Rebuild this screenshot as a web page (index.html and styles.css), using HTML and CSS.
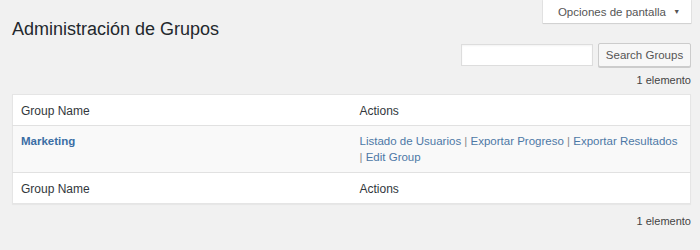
FILE: index.html
```html
<!DOCTYPE html>
<html lang="es">
<head>
    <meta charset="UTF-8">
    <meta name="viewport" content="width=device-width, initial-scale=1.0">
    <title>Administración de Grupos</title>
    <link rel="stylesheet" href="styles.css">
</head>
<body>

<div class="wrap">
    <div class="top-bar">
        <h1 class="page-title">Administración de Grupos</h1>
        <button class="screen-options" type="button">Opciones de pantalla <span class="arrow">&#9660;</span></button>
    </div>

    <form class="search-box">
        <input class="search-input" type="search">
        <button class="button" type="button">Search Groups</button>
    </form>

    <div class="count">1 elemento</div>

    <table class="list-table">
        <colgroup>
            <col class="col-name">
            <col>
        </colgroup>
        <thead>
            <tr>
                <th>Group Name</th>
                <th>Actions</th>
            </tr>
        </thead>
        <tbody>
            <tr class="alt">
                <td><a class="row-title" href="#">Marketing</a></td>
                <td class="actions">
                    <span class="item"><a href="#">Listado de Usuarios</a></span>
                    <span class="item">| <a href="#">Exportar Progreso</a></span>
                    <span class="item">| <a href="#">Exportar Resultados</a></span>
                    <span class="item">| <a href="#">Edit Group</a></span>
                </td>
            </tr>
        </tbody>
        <tfoot>
            <tr>
                <th>Group Name</th>
                <th>Actions</th>
            </tr>
        </tfoot>
    </table>

    <div class="count bottom">1 elemento</div>
</div>

</body>
</html>
```

FILE: styles.css
```css
body {
    margin: 0;
    background: #f1f1f1;
    color: #32373c;
    font-family: "Liberation Sans", Arial, sans-serif;
    font-size: 12px;
}
.wrap {
    padding: 0 9px 0 12px;
}
.top-bar {
    display: flex;
    justify-content: space-between;
    align-items: flex-start;
}
.page-title {
    margin: 17px 0 0;
    font-size: 18px;
    font-weight: 400;
    line-height: 24px;
    color: #23282d;
}
.screen-options {
    width: 148px;
    height: 23px;
    border: none;
    background: #fff;
    box-shadow: 0 0 0 1px rgba(0, 0, 0, 0.05), 0 1px 1px rgba(0, 0, 0, 0.08);
    color: #555;
    font-family: inherit;
    font-size: 11.5px;
    padding: 0 0 0 4px;
}
.screen-options .arrow {
    font-size: 7px;
    margin-left: 4px;
    vertical-align: 2px;
}
.search-box {
    display: flex;
    justify-content: flex-end;
    align-items: center;
    gap: 5px;
    margin: 2px 0 0;
}
.search-input {
    width: 132px;
    height: 22px;
    box-sizing: border-box;
    border: 1px solid #ddd;
    background: #fff;
    box-shadow: inset 0 1px 2px rgba(0, 0, 0, 0.05);
    margin: 0;
}
.button {
    width: 93px;
    height: 24px;
    border: 1px solid #ccc;
    border-radius: 2px;
    background: #f7f7f7;
    box-shadow: 0 1px 0 #ccc;
    color: #555;
    font-family: inherit;
    font-size: 11.5px;
    padding: 0;
}
.count {
    margin-top: 4px;
    text-align: right;
    font-size: 11px;
    line-height: 18px;
    color: #444;
}
.count.bottom {
    margin-top: 8px;
}
.list-table {
    width: 100%;
    margin-top: 5px;
    border-collapse: collapse;
    table-layout: fixed;
    background: #fff;
    border: 1px solid #e5e5e5;
    box-shadow: 0 1px 1px rgba(0, 0, 0, 0.04);
}
.col-name {
    width: 339px;
}
.list-table th,
.list-table td {
    padding: 7px 8px;
    text-align: left;
    vertical-align: top;
    line-height: 16px;
}
.list-table th {
    padding: 8px 8px 6px;
    font-weight: 400;
    font-size: 12px;
    color: #32373c;
}
.list-table thead th {
    border-bottom: 1px solid #e1e1e1;
}
.list-table tfoot th {
    border-top: 1px solid #e1e1e1;
}
.list-table tr.alt {
    background: #f9f9f9;
}
.list-table a {
    color: #3b6ea5;
    text-decoration: none;
}
.row-title {
    font-weight: 700;
    font-size: 11.5px;
}
.actions {
    font-size: 11.5px;
    color: #888;
    padding-right: 4px;
}
.actions .item {
    white-space: nowrap;
}
.actions a {
    color: #4d78a6;
}
```
